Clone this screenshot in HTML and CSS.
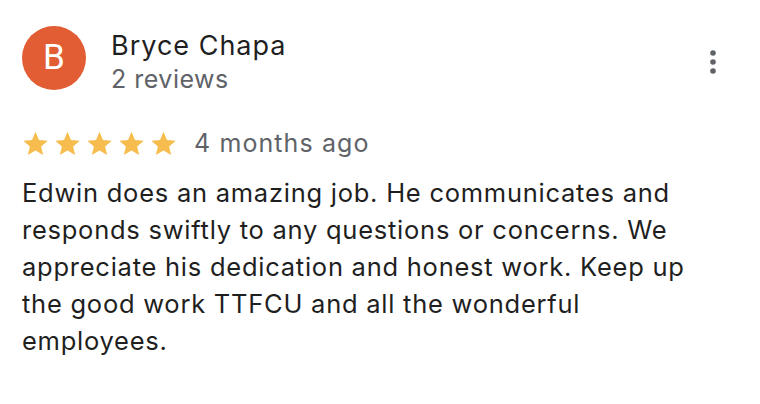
FILE: index.html
```html
<!DOCTYPE html>
<html>
<head>
<meta charset="utf-8">
<link rel="stylesheet" href="styles.css">
</head>
<body>
<div class="review">
  <div class="header">
    <div class="avatar">B</div>
    <div class="who">
      <div class="name">Bryce Chapa</div>
      <div class="count">2 reviews</div>
    </div>
    <div class="menu">
      <svg width="6" height="24" viewBox="0 0 6 24"><circle cx="3" cy="3" r="2.8" fill="#5f6368"/><circle cx="3" cy="12" r="2.8" fill="#5f6368"/><circle cx="3" cy="21" r="2.8" fill="#5f6368"/></svg>
    </div>
  </div>
  <div class="meta">
    <div class="stars">
      <svg class="star" viewBox="0 0 24 24"><path d="M12 1.6l3.1 7.2 7.8.7-5.9 5.1 1.8 7.7L12 18.2l-6.8 4.1L7 14.6 1.1 9.5l7.8-.7z"/></svg>
      <svg class="star" viewBox="0 0 24 24"><path d="M12 1.6l3.1 7.2 7.8.7-5.9 5.1 1.8 7.7L12 18.2l-6.8 4.1L7 14.6 1.1 9.5l7.8-.7z"/></svg>
      <svg class="star" viewBox="0 0 24 24"><path d="M12 1.6l3.1 7.2 7.8.7-5.9 5.1 1.8 7.7L12 18.2l-6.8 4.1L7 14.6 1.1 9.5l7.8-.7z"/></svg>
      <svg class="star" viewBox="0 0 24 24"><path d="M12 1.6l3.1 7.2 7.8.7-5.9 5.1 1.8 7.7L12 18.2l-6.8 4.1L7 14.6 1.1 9.5l7.8-.7z"/></svg>
      <svg class="star" viewBox="0 0 24 24"><path d="M12 1.6l3.1 7.2 7.8.7-5.9 5.1 1.8 7.7L12 18.2l-6.8 4.1L7 14.6 1.1 9.5l7.8-.7z"/></svg>
    </div>
    <span class="date">4 months ago</span>
  </div>
  <p class="text">Edwin does an amazing job. He communicates and<br>responds swiftly to any questions or concerns. We<br>appreciate his dedication and honest work. Keep up<br>the good work TTFCU and all the wonderful<br>employees.</p>
</div>
</body>
</html>
```
FILE: styles.css
```css
html, body {
  margin: 0;
  padding: 0;
  background: #fff;
}
body {
  font-family: Inter, Roboto, "Noto Sans", Arial, sans-serif;
  color: #1f1f1f;
}
.review {
  padding: 26px 45px 0 22px;
}
.header {
  display: flex;
  align-items: flex-start;
}
.avatar {
  width: 64px;
  height: 64px;
  border-radius: 50%;
  background: #e25d33;
  color: #fff;
  font-family: Roboto, Arial, sans-serif;
  font-size: 35px;
  line-height: 64px;
  text-align: center;
  flex: none;
}
.who {
  margin-left: 25px;
  margin-top: 3px;
  flex: 1;
}
.name {
  font-size: 27px;
  line-height: 33px;
  letter-spacing: 1px;
  color: #1f1f1f;
}
.count {
  font-size: 25px;
  line-height: 34px;
  letter-spacing: 0.5px;
  color: #5f6368;
}
.menu {
  margin-top: 24px;
  margin-right: -1px;
  width: 6px;
  height: 24px;
  flex: none;
}
.menu svg { display: block; }
.meta {
  display: flex;
  align-items: center;
  margin-top: 32px;
  height: 30px;
}
.stars {
  display: flex;
  gap: 5px;
}
.star {
  width: 27px;
  height: 27px;
  fill: #f6bd4e;
  display: block;
}
.date {
  margin-left: 17px;
  font-size: 25px;
  line-height: 30px;
  letter-spacing: 1.1px;
  color: #5f6368;
}
.text {
  margin: 16px 0 0 0;
  font-size: 25.5px;
  line-height: 37px;
  letter-spacing: 0.75px;
  color: #1f1f1f;
}
```
